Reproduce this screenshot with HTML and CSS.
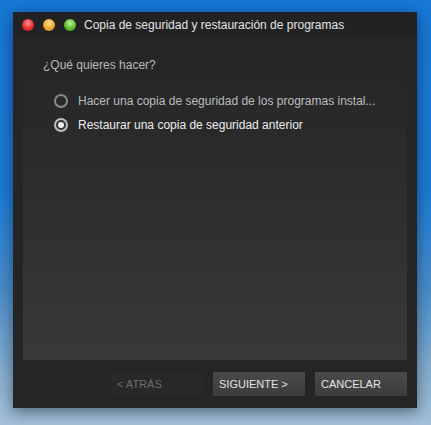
FILE: index.html
```html
<!DOCTYPE html>
<html lang="es">
<head>
<meta charset="utf-8">
<link rel="stylesheet" href="styles.css">
</head>
<body>
<div class="window">
  <div class="titlebar">
    <div class="lights">
      <span class="light red"></span>
      <span class="light yellow"></span>
      <span class="light green"></span>
    </div>
    <div class="title">Copia de seguridad y restauración de programas</div>
  </div>
  <div class="panel">
    <div class="question">¿Qué quieres hacer?</div>
    <div class="options">
      <div class="option">
        <span class="radio"></span>
        <span class="label dim">Hacer una copia de seguridad de los programas instal...</span>
      </div>
      <div class="option">
        <span class="radio checked"></span>
        <span class="label">Restaurar una copia de seguridad anterior</span>
      </div>
    </div>
  </div>
  <div class="footer">
    <div class="btn disabled">&lt; ATRÁS</div>
    <div class="btn">SIGUIENTE &gt;</div>
    <div class="btn">CANCELAR</div>
  </div>
</div>
</body>
</html>
```

FILE: styles.css
```css
html, body {
  margin: 0;
  padding: 0;
}
body {
  width: 431px;
  height: 425px;
  overflow: hidden;
  background: linear-gradient(180deg, #1677d6 0%, #1a7bd6 45%, #4a8dca 68%, #86aecf 88%, #a4c0d8 100%);
  font-family: "Liberation Sans", Arial, sans-serif;
}
.window {
  margin: 12px 0 0 13px;
  width: 404px;
  height: 396px;
  background: #252527;
  box-shadow: 0 4px 14px rgba(0, 0, 0, 0.45);
  display: flex;
  flex-direction: column;
}
.titlebar {
  height: 26px;
  display: flex;
  align-items: center;
  padding-left: 9px;
  background: #222225;
}
.lights {
  display: flex;
  gap: 9px;
}
.light {
  width: 12px;
  height: 12px;
  border-radius: 50%;
  display: block;
}
.red {
  background: radial-gradient(circle at 50% 35%, #ff9b9b 0%, #f03a3a 45%, #b81313 100%);
}
.yellow {
  background: radial-gradient(circle at 50% 35%, #ffe59a 0%, #f5b13a 45%, #c77f0f 100%);
}
.green {
  background: radial-gradient(circle at 50% 35%, #c9f59a 0%, #6cc63a 45%, #3a8f16 100%);
}
.title {
  margin-left: 8px;
  color: #e2e2e2;
  font-size: 12px;
}
.panel {
  margin: 6px 10px 0 10px;
  height: 316px;
  background: linear-gradient(180deg, #252527 0%, #2c2c2d 40%, #393939 100%);
  padding-top: 14px;
  box-sizing: border-box;
}
.question {
  padding-left: 20px;
  color: #b9b9b9;
  font-size: 12px;
  line-height: 14px;
}
.options {
  margin-top: 22px;
  padding-left: 31px;
  display: flex;
  flex-direction: column;
  gap: 10px;
}
.option {
  display: flex;
  align-items: center;
  height: 14px;
}
.radio {
  width: 10px;
  height: 10px;
  border-radius: 50%;
  border: 2px solid #8a8a8a;
  background: #2a2a2a;
  display: block;
  position: relative;
  flex: none;
}
.radio.checked {
  border-color: #bdbdbd;
  background: #353535;
}
.radio.checked::after {
  content: "";
  position: absolute;
  left: 2px;
  top: 2px;
  width: 6px;
  height: 6px;
  border-radius: 50%;
  background: #f2f2f2;
}
.label {
  margin-left: 10px;
  color: #ececec;
  font-size: 12px;
  white-space: nowrap;
}
.label.dim {
  color: #bcbcbc;
}
.footer {
  display: flex;
  justify-content: flex-end;
  gap: 10px;
  padding: 12px 10px 0 0;
}
.btn {
  width: 92px;
  height: 24px;
  box-sizing: border-box;
  padding-left: 6px;
  display: flex;
  align-items: center;
  font-size: 11px;
  color: #e4e4e4;
  background: linear-gradient(180deg, #4a4a4a 0%, #3c3c3c 100%);
}
.btn.disabled {
  color: #6f6f6f;
  background: #282828;
}
```
